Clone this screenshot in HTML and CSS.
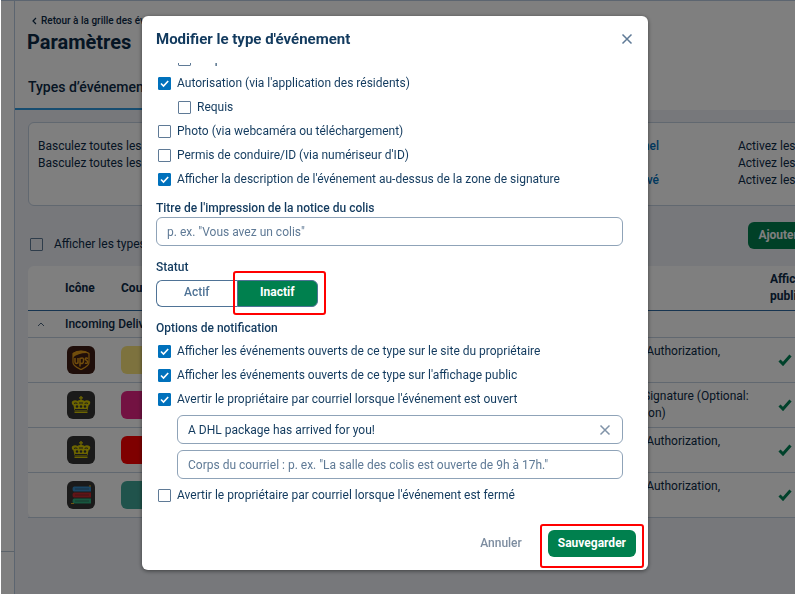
FILE: index.html
```html
<!DOCTYPE html>
<html lang="fr">
<head>
    <meta charset="UTF-8">
    <meta name="viewport" content="width=device-width, initial-scale=1.0">
    <title>Paramètres - Types d'événement</title>
    <link rel="stylesheet" href="styles.css">
</head>
<body>
    <svg class="sprite" aria-hidden="true">
        <symbol id="check" viewBox="0 0 14 12">
            <path d="M1.5 6.5l3.5 3.5L12.5 1.5" fill="none" stroke="#008556" stroke-width="3"/>
        </symbol>
        <symbol id="close" viewBox="0 0 12 12">
            <path d="M1.5 1.5l9 9M10.5 1.5l-9 9" fill="none" stroke="currentColor" stroke-width="1.5"/>
        </symbol>
        <symbol id="crown" viewBox="0 0 28 28">
            <rect width="28" height="28" rx="6" fill="#343434"/>
            <g fill="#d8c800">
                <path d="M13.3 5h1.4v1.3H16v1.3h-1.3V9h-1.4V7.600H12V6.300h1.300z"/>
                <path d="M5 10.500c2-1.500 4-1.500 5.500-.5C12 8.800 16 8.800 17.500 10c1.500-1 3.500-1 5.500.5.600 1.500 0 3-1.500 4l-1 5h-13l-1-5c-1.500-1-2.100-2.500-1.500-4z"/>
                <path d="M7.500 20.500h13V22h-13z"/>
            </g>
            <path d="M7 12.500c1.500-1 3-.5 3.500.5M21 12.500c-1.500-1-3-.5-3.500.5M12 12h4M8 18.500h12" fill="none" stroke="#343434"/>
            <g fill="#343434">
                <circle cx="10" cy="15.500" r="1.200"/>
                <circle cx="14" cy="15.500" r="1.200"/>
                <circle cx="18" cy="15.500" r="1.200"/>
            </g>
        </symbol>
    </svg>

    <div class="page">
        <aside class="sidebar">
            <div class="sidebar-menu"></div>
        </aside>
        <main class="content">
            <header class="page-header">
                <a href="#" class="back">
                    <svg width="5" height="8" viewBox="0 0 5 8"><path d="M4 1L1 4l3 3" fill="none" stroke="currentColor" stroke-width="1.2"/></svg>
                    Retour à la grille des événements
                </a>
                <h1>Paramètres</h1>
                <nav class="tabs">
                    <a href="#" class="tab">Types d’événement</a>
                </nav>
            </header>

            <section class="info">
                <p>Basculez toutes les options<br>Basculez toutes les options</p>
                <p class="info-links"><a href="#">Personnel</a><br><br><a href="#">Privé</a></p>
                <p>Activez les<br>Activez les<br>Activez les</p>
            </section>

            <div class="toolbar">
                <label class="toolbar-filter">
                    <input type="checkbox">
                    Afficher les types inactifs
                </label>
                <button type="button" class="btn">Ajouter</button>
            </div>

            <table class="types">
                <colgroup>
                    <col class="col-toggle">
                    <col class="col-icon">
                    <col class="col-color">
                    <col class="col-options">
                    <col class="col-public">
                </colgroup>
                <thead>
                    <tr>
                        <th></th>
                        <th>Icône</th>
                        <th>Couleur</th>
                        <th></th>
                        <th>Affichage<br>public</th>
                    </tr>
                </thead>
                <tbody>
                    <tr class="group">
                        <td><svg width="8" height="6" viewBox="0 0 8 6"><path d="M1 5l3-3 3 3" fill="none" stroke="#4d6680"/></svg></td>
                        <td colspan="4">Incoming Deliveries</td>
                    </tr>
                    <tr>
                        <td></td>
                        <td>
                            <svg class="icon" viewBox="0 0 28 28">
                                <rect width="28" height="28" rx="6" fill="#3f1c14"/>
                                <path d="M6 7.500c5-3 11-3 16 0v9c0 3.500-4 5-8 7-4-2-8-3.500-8-7z" fill="none" stroke="#e39a18" stroke-width="1.200"/>
                                <path d="M6 11.500c4-3.500 9-5 16-4.500V7c-5-3-11-3-16 0z" fill="#e39a18"/>
                                <path d="M8 12v4c0 2 3 2 3 0v-4m0 0v5.500M13 20.500V12.500c3-1.500 4 0 3.500 2.500 0 2.500-1.500 3-3.500 2M21 12.500c-3-1.500-3.500 1-1.500 2 2.500 1.200 1 4-1.500 2.300" fill="none" stroke="#e39a18" stroke-width="1.500"/>
                            </svg>
                        </td>
                        <td><span class="swatch yellow"></span></td>
                        <td class="options">Signature, Authorization,<br>Photo</td>
                        <td><svg class="check" width="14" height="12"><use href="#check"/></svg></td>
                    </tr>
                    <tr>
                        <td></td>
                        <td><svg class="icon"><use href="#crown"/></svg></td>
                        <td><span class="swatch pink"></span></td>
                        <td class="options">Required: Signature (Optional:<br>Authorization)</td>
                        <td><svg class="check" width="14" height="12"><use href="#check"/></svg></td>
                    </tr>
                    <tr>
                        <td></td>
                        <td><svg class="icon"><use href="#crown"/></svg></td>
                        <td><span class="swatch red"></span></td>
                        <td class="options">Signature, Authorization,<br>Photo</td>
                        <td><svg class="check" width="14" height="12"><use href="#check"/></svg></td>
                    </tr>
                    <tr>
                        <td></td>
                        <td>
                            <svg class="icon" viewBox="0 0 28 28">
                                <rect width="28" height="28" rx="6" fill="#343434"/>
                                <path d="M24 5.500H7a1.500 2.500 0 0 0 0 5h17z" fill="#3388c4"/>
                                <path d="M24 11.500H7a1.500 2.500 0 0 0 0 5h17z" fill="#c4282e"/>
                                <path d="M24 17.500H7a1.500 2.500 0 0 0 0 5h17z" fill="#2fae7f"/>
                                <path d="M8 8h14M8 14h14M8 20h14" stroke="#343434" stroke-opacity=".5"/>
                                <path d="M23 4v2M4 22.500h3" stroke="#d8a820"/>
                            </svg>
                        </td>
                        <td><span class="swatch teal"></span></td>
                        <td class="options">Signature, Authorization,<br>Photo</td>
                        <td><svg class="check" width="14" height="12"><use href="#check"/></svg></td>
                    </tr>
                </tbody>
            </table>
        </main>
    </div>

    <div class="overlay">
        <form class="modal" role="dialog" aria-labelledby="modalTitle">
            <div class="modal-header">
                <h2 id="modalTitle">Modifier le type d'événement</h2>
                <button type="button" class="icon-btn" aria-label="Fermer">
                    <svg width="12" height="12"><use href="#close"/></svg>
                </button>
            </div>

            <div class="modal-body">
                <label class="option sub"><input type="checkbox">Requis</label>
                <label class="option"><input type="checkbox" checked>Autorisation (via l'application des résidents)</label>
                <label class="option sub"><input type="checkbox">Requis</label>
                <label class="option"><input type="checkbox">Photo (via webcaméra ou téléchargement)</label>
                <label class="option"><input type="checkbox">Permis de conduire/ID (via numériseur d'ID)</label>
                <label class="option"><input type="checkbox" checked>Afficher la description de l'événement au-dessus de la zone de signature</label>

                <label class="field-label first" for="printTitle">Titre de l'impression de la notice du colis</label>
                <input type="text" class="field" id="printTitle" placeholder="p. ex. &quot;Vous avez un colis&quot;">

                <div class="field-label">Statut</div>
                <div class="status">
                    <button type="button" class="status-btn">Actif</button>
                    <button type="button" class="status-btn active">Inactif<span class="highlight"></span></button>
                </div>

                <div class="field-label last">Options de notification</div>
                <label class="option"><input type="checkbox" checked>Afficher les événements ouverts de ce type sur le site du propriétaire</label>
                <label class="option"><input type="checkbox" checked>Afficher les événements ouverts de ce type sur l'affichage public</label>
                <label class="option"><input type="checkbox" checked>Avertir le propriétaire par courriel lorsque l'événement est ouvert</label>
                <div class="mail">
                    <div class="clearable">
                        <input type="text" class="field" aria-label="Objet du courriel" value="A DHL package has arrived for you!">
                        <button type="button" class="icon-btn clear" aria-label="Effacer">
                            <svg width="12" height="12"><use href="#close"/></svg>
                        </button>
                    </div>
                    <input type="text" class="field" aria-label="Corps du courriel" placeholder="Corps du courriel : p. ex. &quot;La salle des colis est ouverte de 9h à 17h.&quot;">
                </div>
                <label class="option"><input type="checkbox">Avertir le propriétaire par courriel lorsque l'événement est fermé</label>
            </div>

            <div class="modal-footer">
                <button type="button" class="link-btn">Annuler</button>
                <button type="submit" class="btn save">Sauvegarder<span class="highlight"></span></button>
            </div>
        </form>
    </div>
</body>
</html>
```

FILE: styles.css
```css
* {
    box-sizing: border-box;
}
body {
    margin: 0;
    font-family: Roboto, "Liberation Sans", sans-serif;
    font-size: 12px;
    line-height: 17px;
    color: #123a5e;
    background: white;
    overflow: hidden;
}
h1, h2, p {
    margin: 0;
}
a {
    color: inherit;
    text-decoration: none;
}
button, input {
    font: inherit;
    color: inherit;
}
button {
    padding: 0;
    border: none;
    background: none;
    cursor: pointer;
}
.sprite {
    display: none;
}

/* page */
.page {
    display: flex;
    min-height: 100vh;
    margin-left: 1px;
    border-top: 1px solid #b9cbe0;
}
.sidebar {
    flex: 0 0 14px;
    border-right: 1px solid #b9cbe0;
}
.sidebar-menu {
    height: 551px;
    border-bottom: 1px solid #b9c6d4;
}
.content {
    flex: 1;
    min-width: 0;
    overflow: hidden;
    background: #eef1f7;
    color: #0c2a47;
}
.page-header {
    padding: 11px 12px 0;
    background: white;
}
.back {
    display: flex;
    align-items: center;
    gap: 4px;
    padding-left: 5px;
    font-size: 10px;
    font-weight: 500;
}
h1 {
    font-size: 20px;
    line-height: 26px;
}
.tabs {
    display: flex;
    margin: 10px -12px 0;
}
.tab {
    padding: 14px 13px 12px;
    border-bottom: 2px solid #2f9be0;
    font-size: 14px;
    font-weight: 500;
}
.info {
    display: grid;
    grid-template-columns: 442px 100px 1fr;
    column-gap: 79px;
    width: 880px;
    height: 84px;
    margin: 12px 13px;
    padding: 15px 9px;
    border: 1px solid #c3d0e0;
    border-radius: 6px;
    background: white;
}
.info-links {
    color: #0071bc;
    text-align: right;
    font-weight: 500;
}
.toolbar {
    display: flex;
    align-items: flex-end;
    justify-content: space-between;
    width: 778px;
    margin: 16px 15px 17px;
}
.toolbar-filter {
    display: flex;
    align-items: center;
    gap: 11px;
    margin-bottom: -4px;
}
.types {
    width: 880px;
    margin-left: 13px;
    table-layout: fixed;
    border-collapse: separate;
    border-spacing: 0;
    border-radius: 6px;
    background: white;
}
.col-toggle {
    width: 37px;
}
.col-icon {
    width: 56px;
}
.col-color {
    width: 469px;
}
.col-options {
    width: 180px;
}
.types th, .types td {
    padding: 0;
    text-align: left;
    border-bottom: 1px solid #c3d0e0;
}
.types th {
    height: 45px;
    border-bottom-color: #2f6ba3;
    font-weight: 700;
}
.types td {
    height: 45px;
}
.types .group td {
    height: 27px;
    font-weight: 500;
}
.group svg {
    display: block;
    margin-left: 9px;
}
.types .options {
    padding-top: 5px;
    vertical-align: top;
}
.icon {
    display: block;
    width: 28px;
    height: 28px;
    margin-left: 2px;
}
.swatch {
    display: block;
    width: 56px;
    height: 28px;
    border-radius: 6px;
}
.yellow { background: #fae57d; }
.pink { background: #e62585; }
.red { background: #ff0000; }
.teal { background: #40a799; }
.check {
    display: block;
    margin-left: 8px;
}

/* shared controls */
input[type="checkbox"] {
    appearance: none;
    flex: none;
    width: 13px;
    height: 13px;
    margin: 0;
    border: 1px solid #5f7a96;
    border-radius: 1px;
    background: transparent;
}
input[type="checkbox"]:checked {
    border-color: #0071bc;
    background: #0071bc url("data:image/svg+xml,%3Csvg xmlns='http://www.w3.org/2000/svg' viewBox='0 0 11 11'%3E%3Cpath d='M2 5.500l2.500 2.500L9.200 3' fill='none' stroke='white' stroke-width='1.600'/%3E%3C/svg%3E") center / 11px no-repeat;
}
.btn {
    position: relative;
    height: 27px;
    padding: 0 10px;
    border-radius: 6px;
    background: #00804e;
    color: white;
    font-weight: 700;
}
.highlight {
    position: absolute;
    border: 2px solid #ff0000;
    border-radius: 3px;
}

/* modal */
.overlay {
    position: fixed;
    inset: 0 0 0 1px;
    padding: 16px 6px 0 0;
    background: rgba(0, 0, 0, 0.5);
}
.modal {
    max-width: 506px;
    margin: 0 auto;
    border-radius: 6px;
    background: white;
    box-shadow: 0 1px 4px rgba(0, 0, 0, 0.5);
}
.modal-header {
    display: flex;
    align-items: center;
    justify-content: space-between;
    height: 47px;
    padding: 0 15px 2px 14px;
}
h2 {
    font-size: 15px;
    line-height: 20px;
    font-weight: 700;
}
.icon-btn {
    display: flex;
    color: #5f7a96;
}
/* scrolled to the end of the form */
.modal-body {
    display: flex;
    flex-direction: column;
    justify-content: flex-end;
    height: 444px;
    padding: 0 25px 0 14px;
    overflow: hidden;
}
.option {
    display: flex;
    flex: none;
    align-items: center;
    gap: 6px;
    height: 24px;
    padding-left: 2px;
}
.option.sub {
    padding-left: 22px;
}
.field-label {
    margin-top: 12px;
    line-height: 18px;
    font-weight: 500;
}
.field-label.first {
    margin-top: 8px;
}
.field-label.last {
    margin-bottom: 2px;
}
.field {
    display: block;
    flex: none;
    width: 100%;
    height: 29px;
    padding: 0 10px;
    border: 1px solid #8fa3b8;
    border-radius: 6px;
    background: white;
    outline: none;
}
.field::placeholder {
    color: #5f7a96;
    opacity: 1;
}
.status {
    display: flex;
    flex: none;
    width: 162px;
    height: 27px;
    margin-top: 4px;
}
.status-btn {
    position: relative;
    flex: 1;
    padding-bottom: 2px;
    border: 1px solid #4f7396;
    border-right: none;
    border-radius: 6px 0 0 6px;
    color: #4f7396;
    font-weight: 500;
}
.status-btn.active {
    border-radius: 0 6px 6px 0;
    border-right: 1px solid #4f7396;
    background: #00804e;
    color: white;
    font-weight: 700;
}
.status-btn .highlight {
    inset: -10px -9px -9px -5px;
}
.mail {
    display: flex;
    flex: none;
    flex-direction: column;
    gap: 6px;
    margin: 4px 0 4px 21px;
}
.clearable {
    position: relative;
}
.clear {
    position: absolute;
    top: 9px;
    right: 12px;
    color: #8093a8;
}
.modal-footer {
    display: flex;
    align-items: center;
    justify-content: flex-end;
    gap: 26px;
    height: 63px;
    padding: 10px 12px 0 14px;
}
.link-btn {
    color: #7d8da0;
    font-weight: 500;
}
.save .highlight {
    inset: -6px -8px -11px -8px;
}
```
